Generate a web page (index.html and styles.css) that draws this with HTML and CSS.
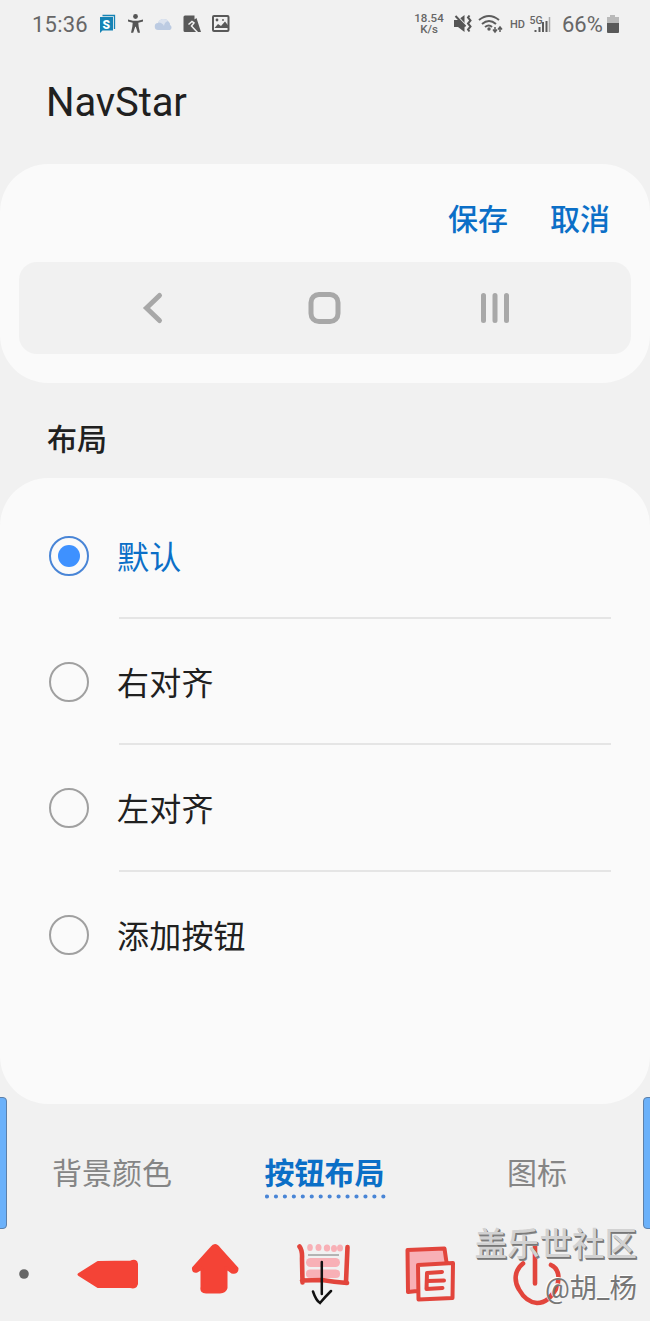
FILE: index.html
```html
<!DOCTYPE html>
<html lang="zh-CN">

<head>
    <meta charset="UTF-8">
    <title>NavStar</title>
    <link rel="stylesheet" href="styles.css">
</head>

<body>
    <div class="screen">
        <header class="status-bar">
            <span class="clock">15:36</span>
            <svg class="status-left" width="134" height="24" viewBox="98 12 134 24">
                <path d="M102.500 15.500h12V29" fill="none" stroke="#1583b5" stroke-width="1.300" />
                <path d="M100 17h13v13.500h-10.500l-2.500 2.500z" fill="#1583b5" />
                <text class="badge-letter" x="102.500" y="28.500">S</text>
                <path d="M128 19.500l5 1.200h5l5-1.200v2l-4.700 1.200.4 4 1.300 6h-2.200l-2-6h-.6l-2 6H131l1.300-6 .4-4-4.700-1.200z" fill="#555" />
                <circle cx="135.500" cy="16.500" r="2.400" fill="#555" />
                <path d="M158.500 30a3.500 3.500 0 0 1-.5-7 6 6 0 0 1 10.500-1.500q2 1.500 1.500 3.500a2.800 2.800 0 0 1 0 5z" fill="#bccbe2" />
                <path d="M158 22.500a6 6 0 0 1 10-1.500 6 6 0 0 0-4 5 6 6 0 0 0-6-3.500z" fill="#dce3ef" />
                <path d="M185 15.500h9.500v4l2-1.500 4.500 14h-16a1.500 1.500 0 0 1-1.500-1.500V17a1.500 1.500 0 0 1 1.500-1.500z" fill="#595959" />
                <path d="M188.500 24.500l3.500-3 2 1.500-2.500 3 6 6.500" fill="none" stroke="#f1f1f1" stroke-width="1.500" />
                <rect x="213" y="16" width="15.500" height="15" rx="1" fill="none" stroke="#595959" stroke-width="2" />
                <path d="M214.500 28l3.500-4 3 2 4-4.500 3.500 4.500v2z" fill="#595959" />
                <circle cx="217" cy="20" r="1.400" fill="#595959" />
                <circle cx="223" cy="20" r=".9" fill="#595959" />
            </svg>
            <span class="net-speed"><span>18.54</span><span>K/s</span></span>
            <svg class="status-right" width="100" height="24" viewBox="452 12 100 24">
                <path d="M454 20h4l6.500-5v17l-6.500-5h-4z" fill="#555" />
                <path d="M455 14l11 12" stroke="#f1f1f1" stroke-width="2" />
                <path d="M455.500 16l10 10.500M469.500 15.500l-1.500 2 2.500 3-2.500 3 2.500 3-2.500 3 1.500 2" fill="none" stroke="#555" stroke-width="2" />
                <g fill="none" stroke="#5c5c5c" stroke-width="2">
                    <path d="M479 20q10-8 20 0M482 24q7-6 14 0M485 27q4-3 7 0" />
                    <path d="M495 27v5m-2-2.500l2 2.500 2-2.500M500 32v-5m-2 2.500l2-2.500 2 2.500" stroke-width="1.500" />
                </g>
                <circle cx="489" cy="29" r="1.700" fill="#5c5c5c" />
                <text class="hd" x="510" y="28">HD</text>
                <text class="fiveg" x="529.500" y="24">5G</text>
                <path d="M535.500 30v2M539.500 27v5M543 22v10M546.500 21v11" stroke="#5c5c5c" stroke-width="2" />
                <path d="M549.500 17v15" stroke="#aaa" stroke-width="1.500" />
            </svg>
            <span class="percent">66%</span>
            <svg class="battery" width="14" height="20" viewBox="0 0 14 20">
                <path d="M4 1h5v2h4v6H1V3h3z" fill="#b9b9b9" />
                <path d="M1 9h12v9a1 1 0 0 1-1 1H2a1 1 0 0 1-1-1z" fill="#595959" />
            </svg>
        </header>

        <h1>NavStar</h1>

        <section class="card preview">
            <div class="actions">
                <a>保存</a>
                <a>取消</a>
            </div>
            <div class="preview-bar">
                <svg width="34" height="34" viewBox="0 0 34 34">
                    <path d="M24.500 4.500L11.500 17l13 12.500" />
                </svg>
                <svg width="34" height="34" viewBox="0 0 34 34">
                    <rect x="4" y="3.500" width="27" height="27" rx="8" />
                </svg>
                <svg width="34" height="34" viewBox="0 0 34 34">
                    <path d="M5.500 4.500v25M17 4.500v25M28.500 4.500v25" />
                </svg>
            </div>
        </section>

        <h2>布局</h2>

        <section class="card options">
            <div class="option selected"><span class="radio"></span><span class="label">默认</span></div>
            <div class="option"><span class="radio"></span><span class="label">右对齐</span></div>
            <div class="option"><span class="radio"></span><span class="label">左对齐</span></div>
            <div class="option"><span class="radio"></span><span class="label">添加按钮</span></div>
        </section>

        <nav class="tabs">
            <a>背景颜色</a>
            <a class="active">按钮布局
                <svg width="122" height="5" viewBox="0 0 122 5">
                    <path d="M2 2.500H119" />
                </svg>
            </a>
            <a>图标</a>
        </nav>

        <footer class="nav-bar">
            <svg width="650" height="91" viewBox="0 1230 650 91">
                <circle cx="24" cy="1274" r="4.800" fill="#666" />
                <g class="red-fill">
                    <path d="M79 1274.500L98 1262.500l33-.5q5-2 5.500 2v20q-1 4-6 2.500H98z" />
                    <path d="M215 1245.500q2 0 4 3l18 20q0 5-5 3.500l-6-4.500V1288q-1 4-6 4h-14q-5 0-4-5v-19l-5 3q-4 1-3.500-3l18-20q2-2.500 3.500-2.500z" />
                </g>
                <g class="pink">
                    <ellipse cx="310" cy="1247.500" rx="2.800" ry="3.500" />
                    <ellipse cx="318.500" cy="1247.500" rx="3" ry="3.500" />
                    <ellipse cx="327" cy="1248" rx="3.200" ry="3.500" />
                    <ellipse cx="334" cy="1248.500" rx="3" ry="3.500" />
                    <ellipse cx="340" cy="1248" rx="3" ry="3.500" />
                    <rect x="306" y="1258" width="34" height="9" rx="4.500" />
                    <rect x="306" y="1269.500" width="34" height="8.500" rx="4" />
                    <path d="M408 1249h36v15h-24v26h-11z" />
                </g>
                <path d="M308 1255h31" stroke="#777" stroke-width="1" />
                <path class="red-line frame" d="M299.500 1246.500q3 4 2.500 12l.5 24M302 1280.500l20-.5q12 2 25 3M347.500 1247l-1.500 35" />
                <path d="M321.800 1262v32M313 1291.500q3 9 7 11.500 5-6 11-12" class="ink" />
                <path class="red-line" d="M417 1291l-9 1-.5-42 37-1.500 2 14M418 1265l35-2-.5 35-34 1.500z" />
                <path class="red-line" d="M427 1273l15-1M427 1273l-.5 16 16-1M428 1281l16-.5" />
                <path class="red-line power" d="M535 1246v37.500M523 1263.500c-9 7-9 18-4 26 5 9 12 13 18 13.500 9 0 14-6 19-14 5-12 2-21-5-24" />
            </svg>
        </footer>

        <div class="edge edge-left"></div>
        <div class="edge edge-right"></div>
        <div class="watermark">
            <div class="community">盖乐世社区</div>
            <div class="author">@胡_杨</div>
        </div>
    </div>
</body>

</html>
```
FILE: styles.css
```css
* {
    box-sizing: border-box;
}

body {
    margin: 0;
    background: #f1f1f1;
    font-family: Roboto, "Noto Sans CJK SC", sans-serif;
    color: #202020;
}

.screen {
    position: relative;
    width: 650px;
    height: 1321px;
    overflow: hidden;
}

svg {
    display: block;
    flex: none;
}

.status-bar {
    display: flex;
    align-items: center;
    height: 48px;
    padding-left: 32px;
    color: #666;
}

.clock {
    width: 66px;
    padding-top: 1px;
    font-size: 22px;
    letter-spacing: 0.2px;
}

.badge-letter {
    font-size: 12px;
    font-weight: 900;
    fill: #fff;
}

.net-speed {
    display: flex;
    flex-direction: column;
    width: 34px;
    margin-left: 180px;
    font-size: 11.5px;
    font-weight: 500;
    line-height: 11px;
    text-align: center;
}

.net-speed span {
    height: 11px;
}

.status-right {
    margin-left: 6px;
}

.hd {
    font-size: 11px;
    font-weight: 500;
    fill: #666;
}

.fiveg {
    font-size: 10.5px;
    font-weight: 500;
    fill: #666;
}

.percent {
    width: 43px;
    margin-left: 10px;
    padding-top: 1px;
    font-size: 22px;
}

.battery {
    margin-left: 1px;
}

h1 {
    height: 116px;
    margin: 0;
    padding: 30px 0 0 46px;
    font-size: 40px;
    font-weight: 400;
    line-height: 49px;
    letter-spacing: -0.1px;
}

.card {
    background: #fafafa;
    border-radius: 48px;
}

.preview {
    height: 219px;
    padding: 0 19px;
}

.actions {
    display: flex;
    justify-content: flex-end;
    gap: 42px;
    height: 98px;
    padding-right: 21px;
    font-size: 30px;
    font-weight: 500;
    line-height: 111px;
    color: #0b6fc7;
}

.preview-bar {
    display: flex;
    align-items: center;
    justify-content: space-between;
    height: 92px;
    padding: 0 119px 0 116px;
    background: #f1f1f1;
    border-radius: 18px;
}

.preview-bar svg {
    fill: none;
    stroke: #a8a8a8;
    stroke-width: 5;
    stroke-linecap: round;
}

h2 {
    height: 95px;
    margin: 0;
    padding-left: 47px;
    font-size: 30px;
    font-weight: 500;
    line-height: 113px;
}

.options {
    height: 626px;
    padding: 14.5px 39px 0 49px;
}

.option {
    display: flex;
    align-items: center;
    gap: 30px;
    height: 126.4px;
}

.radio {
    display: flex;
    align-items: center;
    justify-content: center;
    width: 40px;
    height: 40px;
    border: 2px solid #a0a0a0;
    border-radius: 50%;
}

.label {
    flex: 1;
    height: 126.4px;
    font-size: 32px;
    line-height: 130px;
    text-indent: -2px;
    letter-spacing: 0.2px;
    border-bottom: 2px solid #e5e5e5;
}

.option:last-child .label {
    border-bottom: none;
}

.selected {
    color: #0b6fc7;
}

.selected .radio {
    border-color: #4985d6;
}

.selected .radio::after {
    content: "";
    width: 22px;
    height: 22px;
    border-radius: 50%;
    background: #3e91ff;
}

.tabs {
    display: flex;
    justify-content: space-between;
    height: 126px;
    padding: 48px 83px 0 52px;
    font-size: 30px;
    line-height: 43px;
    color: #858585;
}

.tabs .active {
    width: 120px;
    margin-left: 10px;
    margin-right: 40px;
    font-weight: 700;
    color: #0b6fc7;
}

.tabs svg {
    margin-top: -1px;
    fill: none;
    stroke: #4985d6;
    stroke-width: 4.2;
    stroke-linecap: round;
    stroke-dasharray: 0 8.95;
}

.red-fill {
    fill: #f44336;
    stroke: #f44336;
    stroke-width: 3;
    stroke-linejoin: round;
}

.pink {
    fill: #f8b0b6;
}

.red-line {
    fill: none;
    stroke: #e2453c;
    stroke-width: 4;
    stroke-linecap: round;
    stroke-linejoin: round;
}

.frame {
    stroke-width: 4.6;
}

.power {
    stroke-width: 4.6;
}

.ink {
    fill: none;
    stroke: #111;
    stroke-width: 2.5;
    stroke-linecap: round;
}

.edge {
    position: absolute;
    top: 1097px;
    width: 12px;
    height: 132px;
    background: #6bb1fa;
    border: 1px solid #5d80a9;
    border-radius: 4px;
}

.edge-left {
    left: -5px;
}

.edge-right {
    right: -5px;
}

.watermark {
    position: absolute;
    right: 13px;
    top: 1221px;
    text-align: right;
    white-space: nowrap;
}

.community {
    font-size: 32.5px;
    font-weight: 500;
    line-height: 48px;
    color: #d2d2d2;
    text-shadow: 1px 1px 0 #777, 1.5px 1.5px 0 #888;
}

.author {
    font-size: 27.5px;
    line-height: 40px;
    color: #777;
    text-shadow: -1px -1px 0 #fff;
}
```
